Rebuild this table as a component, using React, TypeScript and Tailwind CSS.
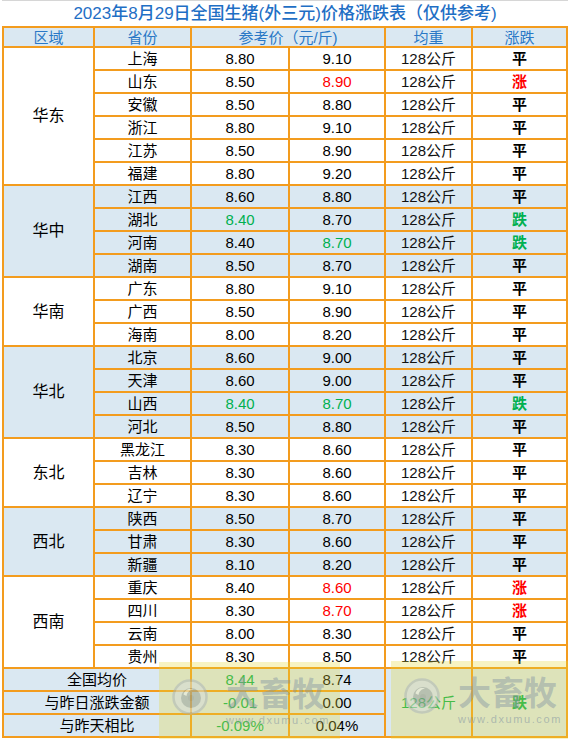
import React from "react";

type Row = { p: string; a: string; b: string; ac?: string; bc?: string; t: "平" | "涨" | "跌" };
type Region = { name: string; blue: boolean; rows: Row[] };

const RED = "text-[#ff0000]";
const GREEN = "text-[#00b050]";

const regions: Region[] = [
  {
    name: "华东",
    blue: false,
    rows: [
      { p: "上海", a: "8.80", b: "9.10", t: "平" },
      { p: "山东", a: "8.50", b: "8.90", bc: RED, t: "涨" },
      { p: "安徽", a: "8.50", b: "8.80", t: "平" },
      { p: "浙江", a: "8.80", b: "9.10", t: "平" },
      { p: "江苏", a: "8.50", b: "8.90", t: "平" },
      { p: "福建", a: "8.80", b: "9.20", t: "平" },
    ],
  },
  {
    name: "华中",
    blue: true,
    rows: [
      { p: "江西", a: "8.60", b: "8.80", t: "平" },
      { p: "湖北", a: "8.40", ac: GREEN, b: "8.70", t: "跌" },
      { p: "河南", a: "8.40", b: "8.70", bc: GREEN, t: "跌" },
      { p: "湖南", a: "8.50", b: "8.70", t: "平" },
    ],
  },
  {
    name: "华南",
    blue: false,
    rows: [
      { p: "广东", a: "8.80", b: "9.10", t: "平" },
      { p: "广西", a: "8.50", b: "8.90", t: "平" },
      { p: "海南", a: "8.00", b: "8.20", t: "平" },
    ],
  },
  {
    name: "华北",
    blue: true,
    rows: [
      { p: "北京", a: "8.60", b: "9.00", t: "平" },
      { p: "天津", a: "8.60", b: "9.00", t: "平" },
      { p: "山西", a: "8.40", ac: GREEN, b: "8.70", bc: GREEN, t: "跌" },
      { p: "河北", a: "8.50", b: "8.80", t: "平" },
    ],
  },
  {
    name: "东北",
    blue: false,
    rows: [
      { p: "黑龙江", a: "8.30", b: "8.60", t: "平" },
      { p: "吉林", a: "8.30", b: "8.60", t: "平" },
      { p: "辽宁", a: "8.30", b: "8.60", t: "平" },
    ],
  },
  {
    name: "西北",
    blue: true,
    rows: [
      { p: "陕西", a: "8.50", b: "8.70", t: "平" },
      { p: "甘肃", a: "8.30", b: "8.60", t: "平" },
      { p: "新疆", a: "8.10", b: "8.20", t: "平" },
    ],
  },
  {
    name: "西南",
    blue: false,
    rows: [
      { p: "重庆", a: "8.40", b: "8.60", bc: RED, t: "涨" },
      { p: "四川", a: "8.30", b: "8.70", bc: RED, t: "涨" },
      { p: "云南", a: "8.00", b: "8.30", t: "平" },
      { p: "贵州", a: "8.30", b: "8.50", t: "平" },
    ],
  },
];

const spanClass: Record<number, string> = {
  3: "row-span-3",
  4: "row-span-4",
  6: "row-span-6",
};

const FONT = { fontFamily: '"Liberation Sans", "Noto Sans CJK SC", sans-serif' };

function Cell({ bg, className = "", children }: { bg: string; className?: string; children?: React.ReactNode }) {
  return <div className={`flex items-center justify-center leading-none ${bg} ${className}`}>{children}</div>;
}

function Logo() {
  return (
    <svg width="36" height="36" viewBox="0 0 36 36" className="shrink-0 opacity-50">
      <circle cx="18" cy="18" r="16.5" fill="#d6dcdf" stroke="#a9b2b9" strokeWidth="2.5" />
      <circle cx="19" cy="19" r="10" fill="#939ea8" />
      <path d="M11.5 15.5 C12.5 11 17 9 21 10.5 C17.5 11 15 13.5 14.5 17 C13.5 16.5 12.5 16 11.5 15.5 Z" fill="#eef1f2" />
      <circle cx="19" cy="19" r="3" fill="#848f99" />
    </svg>
  );
}

function Watermark({ className }: { className: string }) {
  return (
    <div className={`pointer-events-none absolute overflow-hidden bg-[rgba(228,215,55,0.3)] ${className}`}>
      <div className="flex pl-[13px] pt-[16px]">
        <div className="pt-[1px]">
          <Logo />
        </div>
        <div className="ml-[18px] flex flex-col">
          <div className="text-[33px] font-bold leading-[33px] text-[rgba(130,148,162,0.45)] whitespace-nowrap">
            大畜牧
          </div>
          <div className="mt-[3px] text-[11px] leading-[12px] tracking-[1.6px] text-[rgba(130,148,162,0.55)] whitespace-nowrap">
            www.dxumu.com
          </div>
        </div>
      </div>
    </div>
  );
}

export default function App() {
  const WHITE = "bg-white";
  const BLUE = "bg-[#dae8f2]";
  return (
    <div className="relative h-[739px] w-[570px] overflow-hidden bg-white text-[15px] text-black" style={FONT}>
      <div className="ml-[2px] flex h-[26px] w-[566px] items-center justify-center border-t border-[#d6d6d6] text-[17px] font-medium leading-none text-[#1f6fc5]">
        2023年8月29日全国生猪(外三元)价格涨跌表（仅供参考)
      </div>
      <div className="ml-[2px] grid w-[566px] grid-cols-[89px_95px_96px_94px_85px_93px] grid-rows-[18px_repeat(30,21px)] gap-[2px] bg-[#f39c1e] p-[2px]">
        <Cell bg={BLUE} className="text-[#2a78c6]">区域</Cell>
        <Cell bg={BLUE} className="text-[#2a78c6]">省份</Cell>
        <Cell bg={BLUE} className="col-span-2 text-[#2a78c6]">参考价（元/斤)</Cell>
        <Cell bg={BLUE} className="text-[#2a78c6]">均重</Cell>
        <Cell bg={BLUE} className="text-[#2a78c6]">涨跌</Cell>
        {regions.map((r) => {
          const bg = r.blue ? BLUE : WHITE;
          return (
            <React.Fragment key={r.name}>
              <Cell bg={bg} className={`${spanClass[r.rows.length]} text-[16px]`}>{r.name}</Cell>
              {r.rows.map((row) => (
                <React.Fragment key={row.p}>
                  <Cell bg={bg}>{row.p}</Cell>
                  <Cell bg={bg} className={row.ac ?? ""}>{row.a}</Cell>
                  <Cell bg={bg} className={row.bc ?? ""}>{row.b}</Cell>
                  <Cell bg={bg} className="text-[#111]">128公斤</Cell>
                  <Cell
                    bg={bg}
                    className={`font-bold ${row.t === "涨" ? RED : row.t === "跌" ? GREEN : ""}`}
                  >
                    {row.t}
                  </Cell>
                </React.Fragment>
              ))}
            </React.Fragment>
          );
        })}
        <Cell bg={BLUE} className="col-span-2">全国均价</Cell>
        <Cell bg={BLUE} className={GREEN}>8.44</Cell>
        <Cell bg={BLUE}>8.74</Cell>
        <Cell bg={BLUE} className={`row-span-3 ${GREEN}`}>128公斤</Cell>
        <Cell bg={BLUE} className={`row-span-3 font-bold ${GREEN}`}>跌</Cell>
        <Cell bg={BLUE} className="col-span-2">与昨日涨跌金额</Cell>
        <Cell bg={BLUE} className={GREEN}>-0.01</Cell>
        <Cell bg={BLUE}>0.00</Cell>
        <Cell bg={BLUE} className="col-span-2">与昨天相比</Cell>
        <Cell bg={BLUE} className={GREEN}>-0.09%</Cell>
        <Cell bg={BLUE}>0.04%</Cell>
      </div>
      <Watermark className="left-[159px] top-[662px] h-[77px] w-[181px]" />
      <Watermark className="left-[391px] top-[661px] h-[78px] w-[177px]" />
    </div>
  );
}
